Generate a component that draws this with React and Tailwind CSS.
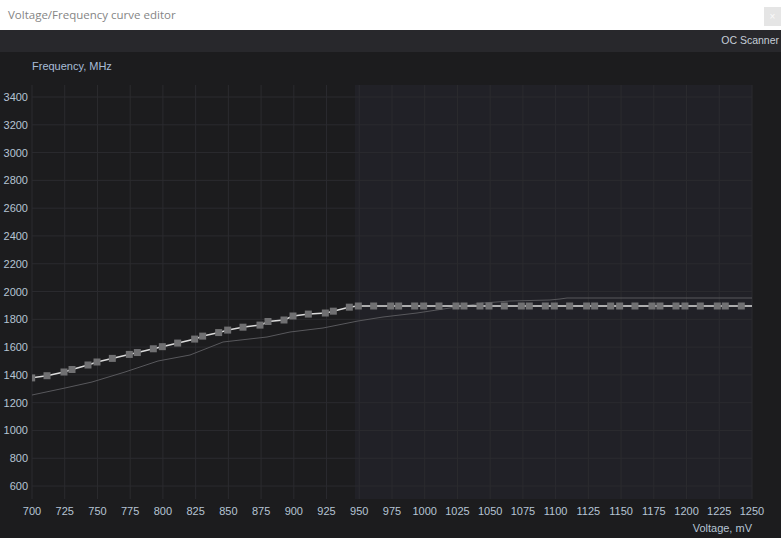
import React from 'react';

const PX = 32;
const PR = 752;
const TOP = 0; // svg coords, page y = 85
const BOTTOM = 414;
const OFF = 85;

const vx = (i) => PX + (720 / 22) * i;
const fy = (f) => 97 + ((3400 - f) / 200) * 27.79 - OFF;

const whiteKnots = [
  [31, 378], [47, 375.7], [64, 372], [72, 369.5], [88, 365], [97, 362],
  [195, 339], [203, 336], [219, 332.5], [228, 330], [244, 327], [261, 325],
  [268, 321.5], [284, 320], [293, 316], [309, 314], [326, 313], [334, 311],
  [350, 307], [358, 306], [752, 306],
];

const grayKnots = [
  [32, 395], [65, 388], [92, 382], [125, 372], [158, 361], [190, 355],
  [223, 342], [267, 337], [290, 332], [323, 328], [358, 321], [383, 317],
  [417, 313], [450, 308], [483, 303], [510, 301], [550, 300], [560, 299],
  [567, 298], [752, 298],
];

const interp = (knots, x) => {
  if (x <= knots[0][0]) return knots[0][1];
  for (let i = 0; i < knots.length - 1; i++) {
    const [x0, y0] = knots[i];
    const [x1, y1] = knots[i + 1];
    if (x >= x0 && x <= x1) return y0 + ((x - x0) / (x1 - x0)) * (y1 - y0);
  }
  return knots[knots.length - 1][1];
};

const squares = [];
for (let n = -1; n <= 10; n++) {
  for (const o of [0, 17, 25, 41, 50]) {
    const x = 47 + 65.33 * n + o;
    if (x >= 31 && x <= 745) squares.push([x, interp(whiteKnots, x)]);
  }
}

const pts = (k) => k.map(([x, y]) => `${x},${y - OFF}`).join(' ');

const freqs = [];
for (let f = 600; f <= 3400; f += 200) freqs.push(f);
const volts = [];
for (let v = 700; v <= 1250; v += 25) volts.push(v);

const Chart = () => (
  <svg width="781" height="453" className="block font-['Liberation_Sans',Arial,sans-serif] text-[11px]">
    <defs>
      <clipPath id="plot">
        <rect x={PX} y={TOP} width={PR - PX} height={BOTTOM - TOP} />
      </clipPath>
    </defs>
    <rect x={355} y={TOP} width={PR - 355} height={BOTTOM - TOP} fill="#212127" />
    {volts.map((v, i) => (
      <line key={v} x1={vx(i)} x2={vx(i)} y1={TOP} y2={BOTTOM} stroke="#2b2b2f" strokeWidth="1" />
    ))}
    {freqs.map((f) => (
      <line key={f} x1={PX} x2={PR} y1={fy(f)} y2={fy(f)} stroke="#2b2b2f" strokeWidth="1" />
    ))}
    {freqs.map((f) => (
      <text key={f} x={28} y={fy(f)} textAnchor="end" dominantBaseline="central" fill="#b6c4d4">
        {f}
      </text>
    ))}
    {volts.map((v, i) => (
      <text key={v} x={vx(i)} y={426} textAnchor="middle" dominantBaseline="central" fill="#b6c4d4">
        {v}
      </text>
    ))}
    <text x={752} y={443} textAnchor="end" dominantBaseline="central" fill="#b6c4d4">
      Voltage, mV
    </text>
    <g clipPath="url(#plot)">
      <polyline points={pts(grayKnots)} fill="none" stroke="#58585c" strokeWidth="1" />
      <polyline points={pts(whiteKnots)} fill="none" stroke="#dcdcdc" strokeWidth="1.5" />
      {squares.map(([x, y], i) => (
        <rect key={i} x={x - 3.5} y={y - OFF - 3.5} width="7" height="7" fill="#707072" />
      ))}
    </g>
  </svg>
);

export default function App() {
  return (
    <div className="w-[781px] h-[538px] flex flex-col bg-[#1c1c1e] overflow-hidden">
      <div className="h-[30px] bg-white flex items-center justify-between pl-[8px]">
        <span className="font-['Open_Sans',sans-serif] text-[11.5px] text-[#858585]">
          Voltage/Frequency curve editor
        </span>
        <div className="w-[17px] h-[19px] bg-[#e5e5e5] flex items-center justify-center text-[10px] leading-none text-[#fafafa] font-['Liberation_Sans',sans-serif] self-start mt-[7px]">
          ×
        </div>
      </div>
      <div className="h-[22px] bg-[#28282c] flex items-center justify-end pr-[2px]">
        <span className="font-['Liberation_Sans',Arial,sans-serif] text-[10.5px] text-[#c6ced8]">OC Scanner</span>
      </div>
      <div className="h-[33px] pl-[32px] pt-[8px]">
        <span className="block leading-[13px] font-['Liberation_Sans',Arial,sans-serif] text-[11px] text-[#a8bcd8]">
          Frequency, MHz
        </span>
      </div>
      <Chart />
    </div>
  );
}
